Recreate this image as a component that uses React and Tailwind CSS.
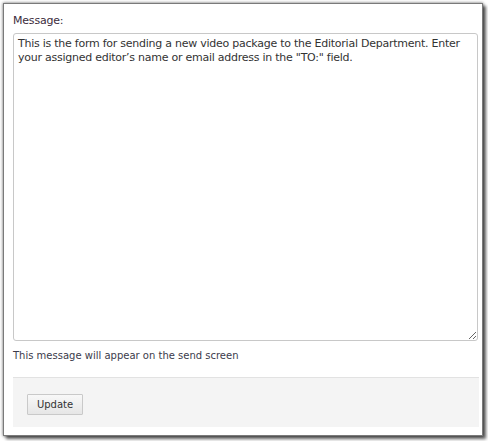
export default function App() {
  return (
    <div className="w-[488px] h-[441px] bg-white pt-[3px] pl-[3px]">
      <div
        className="w-[480px] h-[433px] bg-white border border-[#7a7a7a] shadow-[0_0_3px_rgba(0,0,0,0.6),3px_3px_3px_rgba(0,0,0,0.6)] pl-[9px] pr-[4px] pt-[9px] text-[#333] flex flex-col"
        style={{ fontFamily: '"DejaVu Sans", Verdana, Tahoma, sans-serif' }}
      >
        <label className="text-[11px] leading-[14px] block h-[20px] pt-[1px] text-[#3b2b3b] tracking-[-0.2px]">Message:</label>
        <textarea
          className="w-[465px] h-[308px] border border-[#c8c8c8] rounded-[3px] px-[4px] pt-[3px] text-[11px] leading-[14px] tracking-[-0.25px] text-[#333] resize-y outline-none"
          style={{ fontFamily: '"DejaVu Sans", Verdana, Tahoma, sans-serif' }}
          defaultValue={'This is the form for sending a new video package to the Editorial Department. Enter your assigned editor\u2019s name or email address in the "TO:" field.'}
        />
        <div className="text-[10px] leading-[13px] mt-[8px] text-[#3b3b4b]">This message will appear on the send screen</div>
        <div className="mt-[15px] w-[466px] h-[50px] bg-[#f4f4f4] border-t border-[#e2e2e2] pl-[14px] pt-[13px]">
          <button
            className="w-[56px] h-[21px] border border-[#c9c9c9] bg-gradient-to-b from-[#f8f8f8] to-[#e6e6e6] text-[10px] text-[#333] rounded-[1px]"
            style={{ fontFamily: '"DejaVu Sans", Verdana, Tahoma, sans-serif' }}
          >
            Update
          </button>
        </div>
      </div>
    </div>
  );
}
